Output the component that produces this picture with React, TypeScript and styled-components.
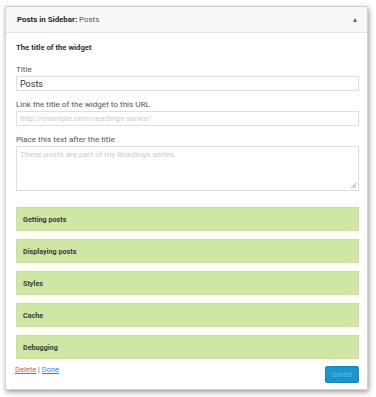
import React from 'react';
import styled, { createGlobalStyle } from 'styled-components';

const GlobalStyle = createGlobalStyle`
  body {
    margin: 0;
    background: #ffffff;
    font-family: Roboto, 'Liberation Sans', sans-serif;
  }
`;

const Page = styled.div`
  width: 376px;
  height: 397px;
  padding: 6px 0 0 5px;
  box-sizing: border-box;
`;

const Widget = styled.div`
  width: 363px;
  height: 384px;
  box-sizing: border-box;
  background: #fff;
  border: 1px solid #d2d2d2;
  box-shadow: 1px 2px 5px rgba(0, 0, 0, 0.4);
  display: flex;
  flex-direction: column;
`;

const Header = styled.div`
  height: 26px;
  box-sizing: border-box;
  display: flex;
  align-items: center;
  justify-content: space-between;
  padding: 0 10px 0 11px;
  background: #f8f8f8;
  border-bottom: 1px solid #e4e4e4;
  font-size: 7.9px;
  line-height: 10px;
`;

const HeaderTitle = styled.span`
  color: #23282d;
  font-weight: 700;
  span {
    font-weight: 400;
    color: #555;
  }
`;

const Arrow = styled.span`
  width: 0;
  height: 0;
  margin-top: 1px;
  border-left: 2.5px solid transparent;
  border-right: 2.5px solid transparent;
  border-bottom: 4px solid #666;
`;

const Body = styled.div`
  flex: 1;
  padding: 10px 8px 0 10px;
  display: flex;
  flex-direction: column;
`;

const Heading = styled.div`
  font-size: 7.7px;
  line-height: 10px;
  font-weight: 700;
  color: #333;
  margin-bottom: 11px;
`;

const Field = styled.div`
  display: flex;
  flex-direction: column;
  margin-bottom: 8px;
`;

const Label = styled.label`
  font-size: 8.1px;
  line-height: 10px;
  color: #555;
  margin-bottom: 2px;
`;

const Input = styled.div<{ $placeholder?: boolean }>`
  height: 15px;
  box-sizing: border-box;
  border: 1px solid #dedede;
  padding: 0 3px;
  display: flex;
  align-items: center;
  font-size: ${(p) => (p.$placeholder ? '8px' : '9px')};
  color: ${(p) => (p.$placeholder ? '#cacaca' : '#333')};
`;

const TextArea = styled.div`
  position: relative;
  height: 45px;
  box-sizing: border-box;
  border: 1px solid #dedede;
  padding: 3px 3px;
  font-size: 8px;
  line-height: 10px;
  color: #cacaca;
`;

const Grip = styled.svg`
  position: absolute;
  right: 1px;
  bottom: 1px;
`;

const Sections = styled.div`
  margin-top: 8px;
  display: flex;
  flex-direction: column;
  gap: 8px;
`;

const Section = styled.div`
  height: 24px;
  box-sizing: border-box;
  background: #cfe6a4;
  border: 1px solid #c6e198;
  display: flex;
  align-items: center;
  padding-left: 6px;
  font-size: 7.2px;
  font-weight: 700;
  color: #3a3a3a;
`;

const Footer = styled.div`
  display: flex;
  justify-content: space-between;
  align-items: flex-start;
  margin-top: 6px;
  font-size: 7.5px;
  line-height: 10px;
`;

const Links = styled.div`
  color: #666;
  margin-left: -1px;
`;

const Link = styled.a<{ $danger?: boolean }>`
  color: ${(p) => (p.$danger ? '#d9534f' : '#1b8fd0')};
  text-decoration: underline;
`;

const SavedButton = styled.div`
  width: 34px;
  height: 17px;
  margin-top: 1px;
  box-sizing: border-box;
  background: #1b95d0;
  border: 1px solid #1686bc;
  border-radius: 2px;
  color: #63bbe6;
  font-size: 7.5px;
  display: flex;
  align-items: center;
  justify-content: center;
`;

const sections = ['Getting posts', 'Displaying posts', 'Styles', 'Cache', 'Debugging'];

function App() {
  return (
    <Page>
      <GlobalStyle />
      <Widget>
        <Header>
          <HeaderTitle>
            Posts in Sidebar: <span>Posts</span>
          </HeaderTitle>
          <Arrow />
        </Header>
        <Body>
          <Heading>The title of the widget</Heading>
          <Field>
            <Label>Title</Label>
            <Input>Posts</Input>
          </Field>
          <Field>
            <Label>Link the title of the widget to this URL</Label>
            <Input $placeholder>http://example.com/readings-series/</Input>
          </Field>
          <Field>
            <Label>Place this text after the title</Label>
            <TextArea>
              These posts are part of my Readings series.
              <Grip width="7" height="7" viewBox="0 0 7 7">
                <path d="M6 1 L1 6 M6 3 L3 6 M6 5 L5 6" stroke="#999" strokeWidth="0.8" />
              </Grip>
            </TextArea>
          </Field>
          <Sections>
            {sections.map((s) => (
              <Section key={s}>{s}</Section>
            ))}
          </Sections>
          <Footer>
            <Links>
              <Link $danger>Delete</Link> | <Link>Done</Link>
            </Links>
            <SavedButton>Saved</SavedButton>
          </Footer>
        </Body>
      </Widget>
    </Page>
  );
}

export default App;
